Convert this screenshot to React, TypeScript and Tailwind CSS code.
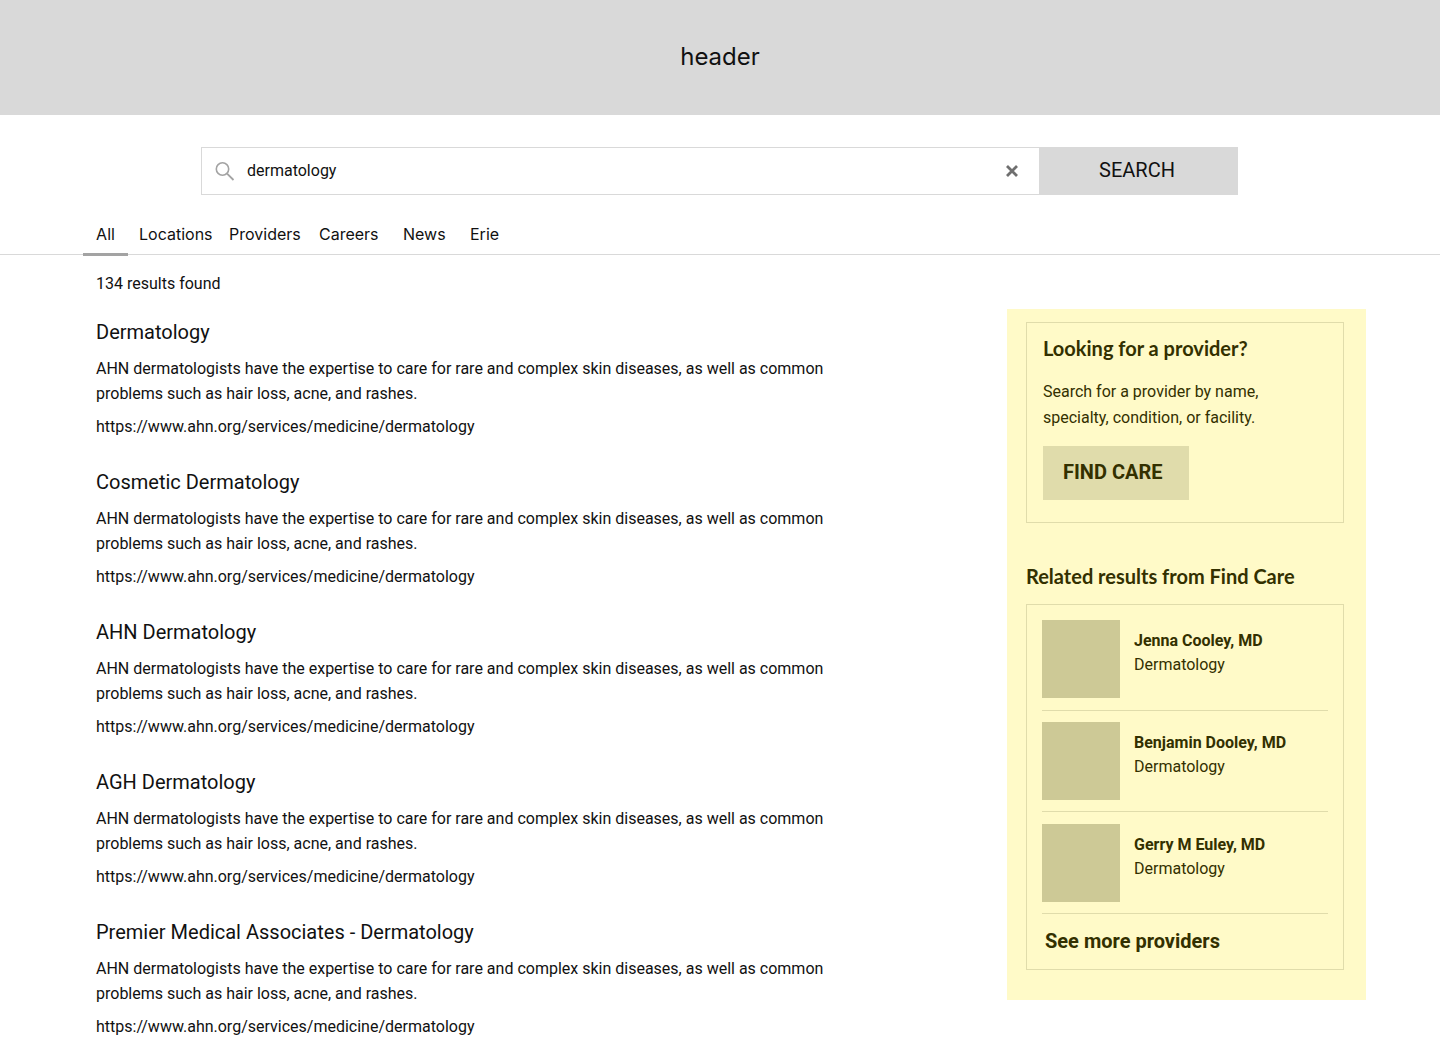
import React from "react";

const tabs = [
  { label: "All", cls: "w-[45px] ml-[83px] mr-[11px] justify-center border-b-[3px] border-[#a3a3a3] pb-[2px]" },
  { label: "Locations", cls: "w-[90px] pb-[5px]" },
  { label: "Providers", cls: "w-[90px] pb-[5px]" },
  { label: "Careers", cls: "w-[84px] pb-[5px]" },
  { label: "News", cls: "w-[67px] pb-[5px]" },
  { label: "Erie", cls: "w-[60px] pb-[5px]" },
];

const results = [
  "Dermatology",
  "Cosmetic Dermatology",
  "AHN Dermatology",
  "AGH Dermatology",
  "Premier Medical Associates - Dermatology",
];

const providers = [
  { name: "Jenna Cooley, MD", cls: "mb-[11px] h-[91px]" },
  { name: "Benjamin Dooley, MD", cls: "mb-[12px] h-[90px]" },
  { name: "Gerry M Euley, MD", cls: "mb-[12px] h-[90px]" },
];

function Result({ title }: { title: string }) {
  return (
    <div className="h-[150px] w-[760px]">
      <h2 className="text-[20px] leading-[28px] text-[#111]">{title}</h2>
      <p className="mt-[10px] text-[16px] leading-[25px] text-[#111]">
        AHN dermatologists have the expertise to care for rare and complex skin diseases, as well as common problems such as hair loss, acne, and rashes.
      </p>
      <p className="mt-[8px] text-[16px] leading-[25px] text-[#111]">https://www.ahn.org/services/medicine/dermatology</p>
    </div>
  );
}

export default function App() {
  return (
    <div className="h-[1058px] overflow-hidden bg-white font-['Roboto',sans-serif]">
      <header className="flex h-[115px] items-center justify-center bg-[#d9d9d9] pb-[2px] font-['Inter',sans-serif] text-[24px] text-[#111]">
        header
      </header>

      <div className="ml-[201px] mt-[32px] flex h-[48px] w-[1037px]">
        <div className="flex flex-1 items-center border border-[#d9d9d9] pl-[13px] pr-[21px]">
          <svg width="20" height="20" viewBox="0 0 20 20" fill="none" stroke="#a3a3a3" strokeWidth="1.6" className="mr-[12px] shrink-0 -translate-x-[0.5px]">
            <circle cx="8" cy="8" r="6.2" />
            <path d="M12.6 12.6 L19 19" strokeWidth="1.8" />
          </svg>
          <span className="flex-1 text-[16px] font-normal text-[#111]">dermatology</span>
          <svg width="12" height="12" viewBox="0 0 12 12" fill="none" stroke="#6f6f6f" strokeWidth="2.8">
            <path d="M1 1 L11 11 M11 1 L1 11" />
          </svg>
        </div>
        <button className="flex w-[198px] items-center justify-center bg-[#d9d9d9] pb-[3px] pr-[4px] text-[20px] text-[#111]">SEARCH</button>
      </div>

      <nav className="mt-[21px] flex h-[39px] border-b border-[#d9d9d9] font-['Inter',sans-serif] text-[16px] text-[#111]">
        {tabs.map((t) => (
          <div key={t.label} className={`flex h-[40px] items-center ${t.cls}`}>
            {t.label}
          </div>
        ))}
      </nav>

      <div className="flex">
        <main className="ml-[96px] w-[911px]">
          <p className="mt-[17px] text-[16px] leading-[24px] text-[#111]">134 results found</p>
          <div className="mt-[22px]">
            {results.map((r) => (
              <Result key={r} title={r} />
            ))}
          </div>
        </main>

        <aside className="ml-0 mt-[54px] h-[691px] w-[359px] bg-[#fffac8] pl-[19px] pr-[22px] pt-[13px] text-[#333000]">
          <div className="h-[201px] border border-[#e0dcab] px-[16px]">
            <h3 className="mt-[12px] font-['Lato',sans-serif] text-[20px] font-bold leading-[27px]">Looking for a provider?</h3>
            <p className="mt-[17px] w-[260px] text-[16px] leading-[26px]">
              Search for a provider by name, specialty, condition, or facility.
            </p>
            <button className="mt-[15px] flex h-[54px] w-[146px] items-center bg-[#e0dcab] pb-[2px] pl-[20px] text-[20px] font-bold">FIND CARE</button>
          </div>

          <h3 className="mt-[40px] font-['Lato',sans-serif] text-[20px] font-bold leading-[26px]">Related results from Find Care</h3>

          <div className="mt-[15px] h-[366px] border border-[#e0dcab] px-[15px] pt-[15px]">
            {providers.map((p) => (
              <div key={p.name} className={`flex border-b border-[#e0dcab] ${p.cls}`}>
                <div className="h-[78px] w-[78px] shrink-0 bg-[#cdc996]" />
                <div className="ml-[14px] pt-[9px]">
                  <div className="text-[16px] font-bold leading-[24px]">{p.name}</div>
                  <div className="text-[16px] leading-[24px]">Dermatology</div>
                </div>
              </div>
            ))}
            <div className="pl-[3px] pt-[1px] text-[20px] font-bold leading-[28px]">See more providers</div>
          </div>
        </aside>
      </div>
    </div>
  );
}
